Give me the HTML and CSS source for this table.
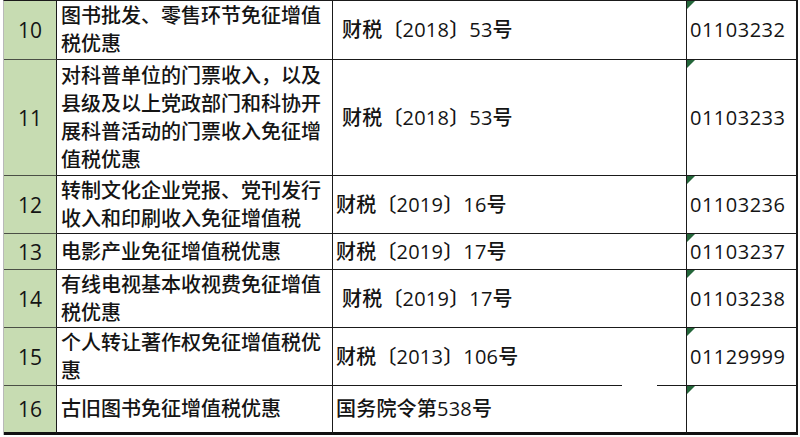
FILE: index.html
```html
<!DOCTYPE html>
<html lang="zh-CN">
<head>
<meta charset="utf-8">
<title>免征增值税优惠</title>
<link rel="stylesheet" href="styles.css">
</head>
<body>
<div class="sheet">
  <div class="grid">
    <div class="cell num r10">10</div>
    <div class="cell item r10">图书批发、零售环节免征增值税优惠</div>
    <div class="cell doc indent r10">财税〔2018〕53号</div>
    <div class="cell code flag r10">01103232</div>

    <div class="cell num r11">11</div>
    <div class="cell item r11">对科普单位的门票收入，以及县级及以上党政部门和科协开展科普活动的门票收入免征增值税优惠</div>
    <div class="cell doc indent r11">财税〔2018〕53号</div>
    <div class="cell code flag r11">01103233</div>

    <div class="cell num r12">12</div>
    <div class="cell item r12">转制文化企业党报、党刊发行收入和印刷收入免征增值税</div>
    <div class="cell doc r12">财税〔2019〕16号</div>
    <div class="cell code flag r12">01103236</div>

    <div class="cell num r13">13</div>
    <div class="cell item r13">电影产业免征增值税优惠</div>
    <div class="cell doc r13">财税〔2019〕17号</div>
    <div class="cell code flag r13">01103237</div>

    <div class="cell num r14">14</div>
    <div class="cell item r14">有线电视基本收视费免征增值税优惠</div>
    <div class="cell doc indent r14">财税〔2019〕17号</div>
    <div class="cell code flag r14">01103238</div>

    <div class="cell num r15">15</div>
    <div class="cell item r15">个人转让著作权免征增值税优惠</div>
    <div class="cell doc r15">财税〔2013〕106号</div>
    <div class="cell code flag r15">01129999</div>

    <div class="cell num r16 last">16</div>
    <div class="cell item r16 last">古旧图书免征增值税优惠</div>
    <div class="cell doc r16 last">国务院令第538号</div>
    <div class="cell code flag r16 last"></div>
  </div>
  <div class="watermark"></div>
</div>
</body>
</html>
```

FILE: styles.css
```css
html, body {
  margin: 0;
  padding: 0;
  background: #ffffff;
}

body {
  width: 800px;
  height: 437px;
  overflow: hidden;
  font-family: "Open Sans", "Noto Sans CJK SC", sans-serif;
  font-size: 20px;
  font-weight: 500;
  color: #141414;
}

.sheet {
  position: relative;
  padding-left: 3px;
  height: 437px;
  box-sizing: border-box;
}

.grid {
  display: grid;
  grid-template-columns: 53px 276px 354px 111px;
  grid-template-rows: 59px 116px 58px 36px 58px 58px 49px;
  border-top: 1px solid #1a1a1a;
  border-left: 1px solid #b9b9b9;
  width: max-content;
}

.cell {
  box-sizing: border-box;
  border-right: 1px solid #1a1a1a;
  border-bottom: 1px solid #1a1a1a;
  display: flex;
  align-items: center;
  line-height: 28px;
  position: relative;
}

.cell.last {
  border-bottom: 3px solid #111111;
}

.num {
  background: #c7dcb2;
  justify-content: center;
  font-size: 21px;
  border-bottom-color: #4a4f45;
}

.item {
  padding-left: 4px;
  padding-right: 2px;
}

.doc {
  padding-left: 3px;
  letter-spacing: 0.2px;
}

.doc.indent {
  padding-left: 9px;
}

.code {
  padding-left: 3px;
  letter-spacing: 0.5px;
  border-right-width: 2px;
}

.flag::before {
  content: "";
  position: absolute;
  left: 0;
  top: 0;
  width: 0;
  height: 0;
  border-top: 8px solid #24663a;
  border-right: 8px solid transparent;
}

.watermark {
  position: absolute;
  left: 622px;
  top: 383px;
  width: 35px;
  height: 6px;
  background: #ffffff;
}
```
